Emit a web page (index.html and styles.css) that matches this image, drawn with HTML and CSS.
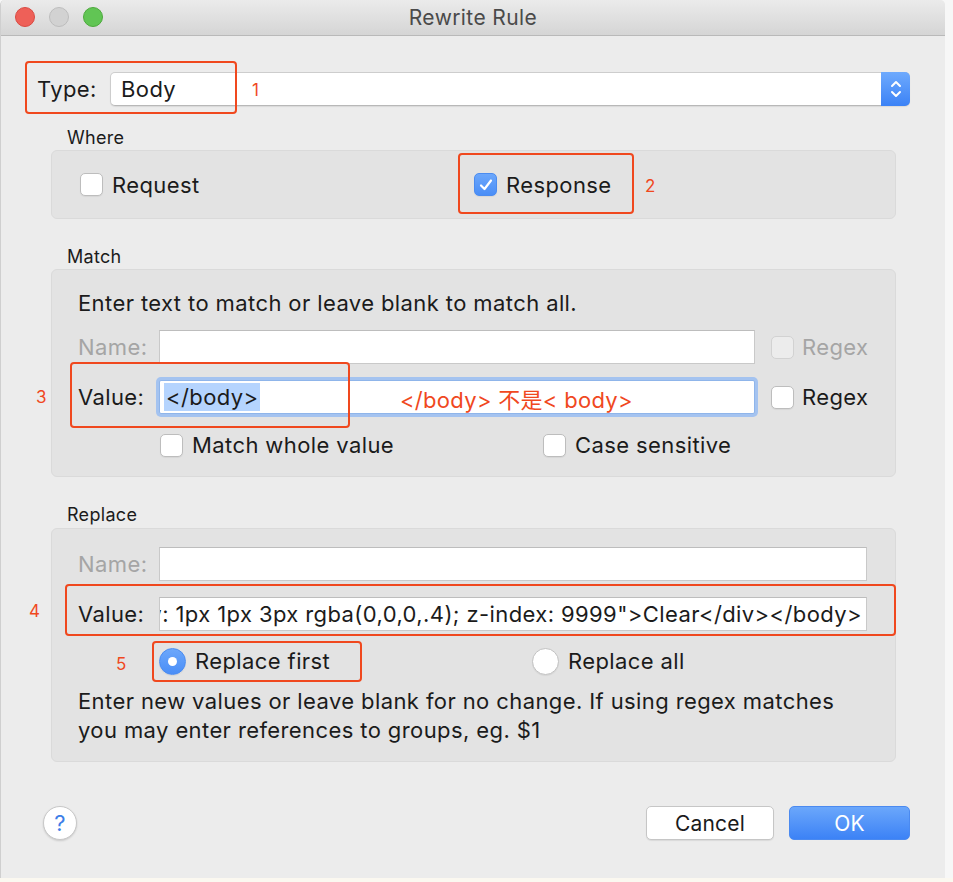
FILE: index.html
```html
<!DOCTYPE html>
<html>
<head>
<meta charset="utf-8">
<link rel="stylesheet" href="styles.css">
</head>
<body>
<div class="window">
  <div class="titlebar">
    <div class="lights">
      <span class="light light-red"></span>
      <span class="light light-gray"></span>
      <span class="light light-green"></span>
    </div>
    <div class="title">Rewrite Rule</div>
  </div>

  <div class="content">
    <div class="type-row">
      <span class="type-label">Type:</span>
      <div class="popup">
        <span class="popup-value">Body</span>
        <span class="stepper">
          <svg width="14" height="22" viewBox="0 0 14 22"><path d="M3 8 L7 4 L11 8 M3 14 L7 18 L11 14" fill="none" stroke="#fff" stroke-width="2" stroke-linecap="round" stroke-linejoin="round"/></svg>
        </span>
      </div>
    </div>

    <div class="section-label">Where</div>
    <div class="box box-where">
      <div class="check"><span class="cb"></span><span>Request</span></div>
      <div class="check"><span class="cb cb-on"><svg width="16" height="16" viewBox="0 0 16 16"><path d="M3 8.5 L6.5 12 L13 3.5" fill="none" stroke="#fff" stroke-width="2.2" stroke-linecap="round" stroke-linejoin="round"/></svg></span><span>Response</span></div>
    </div>

    <div class="section-label">Match</div>
    <div class="box box-match">
      <div class="desc">Enter text to match or leave blank to match all.</div>
      <div class="field-row">
        <span class="field-label dim">Name:</span>
        <div class="input input-match"></div>
        <span class="cb cb-disabled"></span>
        <span class="dim">Regex</span>
      </div>
      <div class="field-row field-row-value">
        <span class="field-label">Value:</span>
        <div class="input input-match input-focus"><span class="sel">&lt;/body&gt;</span></div>
        <span class="cb"></span>
        <span>Regex</span>
      </div>
      <div class="options-row">
        <div class="check"><span class="cb"></span><span>Match whole value</span></div>
        <div class="check"><span class="cb"></span><span>Case sensitive</span></div>
      </div>
    </div>

    <div class="section-label section-label-replace">Replace</div>
    <div class="box box-replace">
      <div class="field-row">
        <span class="field-label dim">Name:</span>
        <div class="input input-replace"></div>
      </div>
      <div class="field-row field-row-rvalue">
        <span class="field-label">Value:</span>
        <div class="input input-replace input-scroll"><span class="scroll-text">box-shadow: 1px 1px 3px rgba(0,0,0,.4); z-index: 9999"&gt;Clear&lt;/div&gt;&lt;/body&gt;</span></div>
      </div>
      <div class="radio-row">
        <div class="check"><span class="radio radio-on"></span><span>Replace first</span></div>
        <div class="check"><span class="radio"></span><span>Replace all</span></div>
      </div>
      <div class="help-text">Enter new values or leave blank for no change. If using regex matches you may enter references to groups, eg. $1</div>
    </div>

    <div class="footer">
      <span class="help-btn">?</span>
      <span class="btn btn-cancel">Cancel</span>
      <span class="btn btn-ok">OK</span>
    </div>
  </div>

  <div class="mark mark-1"></div><span class="num num-1">1</span>
  <div class="mark mark-2"></div><span class="num num-2">2</span>
  <div class="mark mark-3"></div><span class="num num-3">3</span>
  <div class="mark mark-4"></div><span class="num num-4">4</span>
  <div class="mark mark-5"></div><span class="num num-5">5</span>
  <span class="note">&lt;/body&gt; 不是&lt; body&gt;</span>
</div>
<div class="bottom-strip"></div>
</body>
</html>
```

FILE: styles.css
```css
html, body {
  margin: 0;
  padding: 0;
  background: #f7f7f7;
}
body {
  width: 953px;
  height: 882px;
  overflow: hidden;
  font-family: "Inter", "Noto Sans CJK SC", sans-serif;
  color: #1b1b1b;
}
.window {
  position: relative;
  width: 945px;
  height: 878px;
  background: #ececec;
  border-left: 1px solid #cfcfcf;
  border-radius: 5px 5px 0 0;
  box-sizing: border-box;
  overflow: hidden;
}
.bottom-strip {
  height: 4px;
  background: #fbf8f0;
}
.titlebar {
  position: relative;
  height: 35px;
  background: linear-gradient(#ebebeb, #d5d5d5);
  border-bottom: 1px solid #b9b9b9;
  display: flex;
  align-items: center;
  justify-content: center;
}
.lights {
  position: absolute;
  left: 14px;
  top: 7px;
  display: flex;
  gap: 14px;
}
.light {
  width: 20px;
  height: 20px;
  border-radius: 50%;
  box-sizing: border-box;
}
.light-red { background: #ee6058; border: 1px solid #d94a42; }
.light-gray { background: #d2d2d2; border: 1px solid #bdbdbd; }
.light-green { background: #61c554; border: 1px solid #4ca93c; }
.title {
  font-size: 21px;
  color: #4a4a4a;
  letter-spacing: 0.4px;
}
.content {
  padding: 36px 35px 0 36px;
  font-size: 22px;
  letter-spacing: 0.4px;
}
.type-row {
  display: flex;
  align-items: center;
  height: 34px;
}
.type-label {
  width: 73px;
}
.popup {
  flex: 1;
  height: 34px;
  display: flex;
  background: #fff;
  border: 1px solid #cdcdcd;
  border-bottom-color: #b8b8b8;
  border-radius: 5px;
  box-sizing: border-box;
  box-shadow: 0 1px 1px rgba(0,0,0,0.08);
}
.popup-value {
  flex: 1;
  padding-left: 10px;
  line-height: 32px;
}
.stepper {
  width: 29px;
  margin: -1px -1px -1px 0;
  border-radius: 0 5px 5px 0;
  background: linear-gradient(#6eaafd, #3b82f6);
  display: flex;
  align-items: center;
  justify-content: center;
}
.section-label {
  margin: 21px 14px 1px;
  padding-left: 16px;
  font-size: 18px;
  letter-spacing: 0.3px;
  line-height: 22px;
}
.box {
  margin: 0 14px;
  background: #e3e3e3;
  border: 1px solid #dadada;
  border-radius: 6px;
  box-sizing: border-box;
}
.box-where {
  height: 69px;
  display: grid;
  grid-template-columns: 394px 1fr;
  align-items: center;
  padding-left: 28px;
}
.check {
  display: flex;
  align-items: center;
  gap: 9px;
}
.cb {
  width: 23px;
  height: 23px;
  box-sizing: border-box;
  background: #fff;
  border: 1px solid #bdbdbd;
  border-radius: 5px;
  box-shadow: 0 1px 1px rgba(0,0,0,0.06);
  display: flex;
  align-items: center;
  justify-content: center;
  flex: none;
}
.cb-on {
  background: linear-gradient(#6ca7fb, #4a8ef7);
  border-color: #4b8cf0;
}
.cb-disabled {
  background: #ececec;
  border-color: #d2d2d2;
  box-shadow: none;
}
.dim { color: #a5a5a5; }
.box-match {
  height: 208px;
  padding: 20px 0 0 26px;
}
.desc {
  line-height: 26px;
  margin-bottom: 14px;
}
.field-row {
  display: flex;
  align-items: center;
  height: 34px;
}
.field-label {
  width: 81px;
  flex: none;
}
.input {
  height: 34px;
  box-sizing: border-box;
  background: #fff;
  border: 1px solid #c9c9c9;
  border-top-color: #bdbdbd;
  flex: none;
  display: flex;
  align-items: center;
  overflow: hidden;
}
.input-match {
  width: 596px;
  margin-right: 16px;
}
.field-row .cb { margin-right: 8px; }
.field-row-value {
  margin-top: 16px;
}
.input-focus {
  border-color: #8fb5ea;
  box-shadow: 0 0 0 3px #a4c3f0;
  border-radius: 2px;
  padding-left: 4px;
}
.sel {
  background: #b5d4fe;
  padding: 0 2px;
  line-height: 28px;
}
.options-row {
  display: grid;
  grid-template-columns: 383px 1fr;
  margin-top: 18px;
  padding-left: 82px;
}
.section-label-replace {
  margin-bottom: 2px;
}
.box-match + .section-label,
.box-where + .section-label {
  margin-top: 27px;
}
.box-replace {
  height: 234px;
  padding: 18px 0 0 26px;
}
.input-replace {
  width: 708px;
}
.field-row-rvalue {
  margin-top: 16px;
}
.input-scroll {
  justify-content: flex-end;
  padding-right: 4px;
  white-space: nowrap;
}
.scroll-text { flex: none; }
.radio-row {
  display: grid;
  grid-template-columns: 373px 1fr;
  padding-left: 81px;
  margin-top: 16px;
  height: 28px;
  align-items: center;
}
.radio {
  width: 27px;
  height: 27px;
  box-sizing: border-box;
  border-radius: 50%;
  background: #fff;
  border: 1px solid #c2c2c2;
  box-shadow: 0 1px 1px rgba(0,0,0,0.06);
  flex: none;
  position: relative;
}
.radio-on {
  background: linear-gradient(#6ca7fb, #4a8ef7);
  border-color: #4b8cf0;
}
.radio-on::after {
  content: "";
  position: absolute;
  left: 8px;
  top: 8px;
  width: 9px;
  height: 9px;
  border-radius: 50%;
  background: #fff;
}
.help-text {
  margin-top: 12px;
  line-height: 29px;
  width: 775px;
}
.footer {
  display: flex;
  align-items: center;
  margin-top: 44px;
  padding-left: 6px;
  height: 34px;
}
.help-btn {
  width: 34px;
  height: 34px;
  box-sizing: border-box;
  border-radius: 50%;
  background: #fff;
  border: 1px solid #c8c8c8;
  box-shadow: 0 1px 2px rgba(0,0,0,0.15);
  color: #3d7ee8;
  font-size: 22px;
  display: flex;
  align-items: center;
  justify-content: center;
  margin-right: auto;
}
.btn {
  height: 34px;
  box-sizing: border-box;
  border-radius: 5px;
  display: flex;
  align-items: center;
  justify-content: center;
  font-size: 21px;
  letter-spacing: 0.2px;
}
.btn-cancel {
  width: 128px;
  background: #fff;
  border: 1px solid #c6c6c6;
  box-shadow: 0 1px 1px rgba(0,0,0,0.08);
  margin-right: 15px;
}
.btn-ok {
  width: 121px;
  background: linear-gradient(#6ba7fb, #3c82f6);
  color: #fff;
  border: 1px solid #4b8af0;
}
.mark {
  position: absolute;
  border: 2.5px solid #f0481e;
  border-radius: 4px;
  box-sizing: border-box;
}
.mark-1 { left: 24px; top: 61px; width: 212px; height: 53px; }
.mark-2 { left: 457px; top: 153px; width: 176px; height: 61px; }
.mark-3 { left: 69px; top: 362px; width: 280px; height: 66px; }
.mark-4 { left: 64px; top: 584px; width: 831px; height: 52px; }
.mark-5 { left: 151px; top: 641px; width: 210px; height: 41px; }
.num {
  position: absolute;
  color: #f0481e;
  font-size: 17px;
  line-height: 20px;
}
.num-1 { left: 251px; top: 80px; }
.num-2 { left: 644px; top: 176px; }
.num-3 { left: 35px; top: 387px; }
.num-4 { left: 28px; top: 601px; }
.num-5 { left: 115px; top: 654px; }
.note {
  position: absolute;
  left: 399px;
  top: 386px;
  color: #f0481e;
  font-size: 22px;
  letter-spacing: 0.3px;
  line-height: 28px;
}
```
